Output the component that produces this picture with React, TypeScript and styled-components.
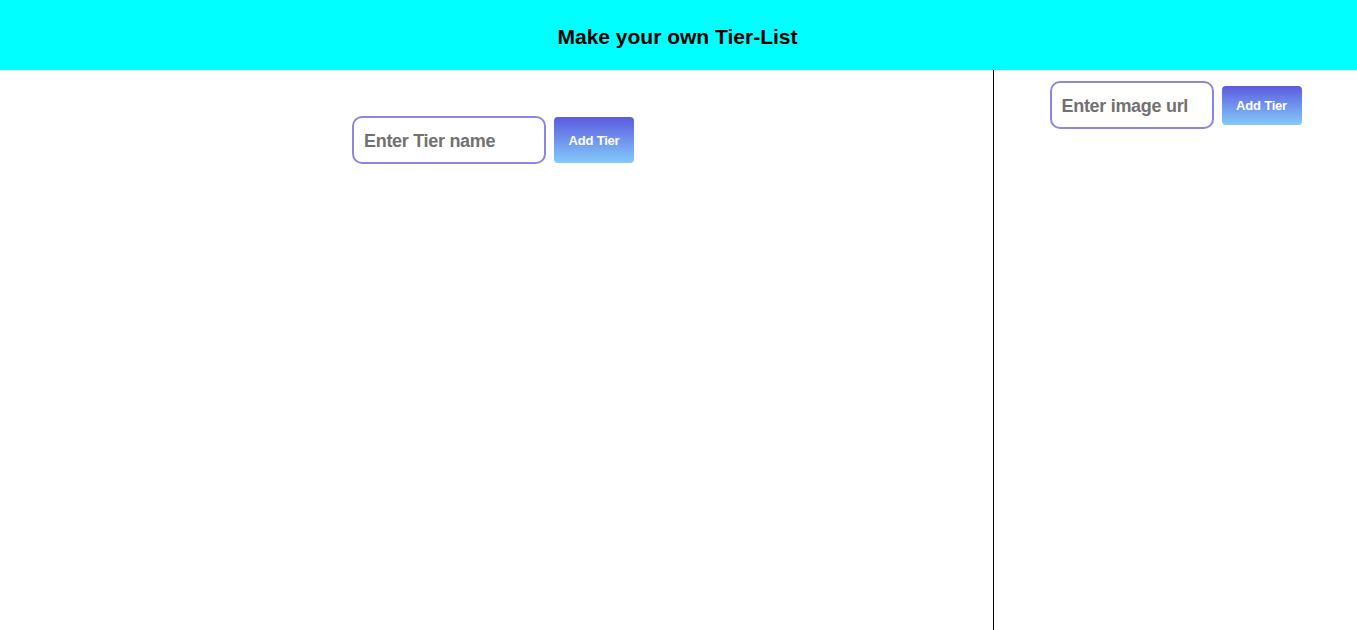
import React from "react";
import styled, { createGlobalStyle } from "styled-components";

const Global = createGlobalStyle`
  html, body { margin: 0; padding: 0; background: #fff; }
  body { font-family: "Liberation Sans", Arial, sans-serif; }
  * { box-sizing: border-box; }
`;

const Page = styled.div`
  display: flex;
  flex-direction: column;
  height: 630px;
`;

const Header = styled.header`
  height: 70px;
  background: #00ffff;
  display: flex;
  align-items: center;
  justify-content: center;
  padding: 3px 2px 0 0;
`;

const Title = styled.h1`
  margin: 0;
  font-size: 21px;
  font-weight: 700;
  color: #000;
  letter-spacing: 0;
`;

const Body = styled.div`
  flex: 1;
  display: flex;
`;

const Main = styled.section`
  width: 994px;
  border-right: 1px solid #000;
  display: flex;
  justify-content: center;
  align-items: flex-start;
  padding: 46px 7px 0 0;
`;

const Side = styled.aside`
  flex: 1;
  display: flex;
  justify-content: center;
  align-items: flex-start;
  padding: 11px 0 0 0;
`;

const Form = styled.form`
  display: flex;
  align-items: center;
  gap: 8px;
`;

const Input = styled.input<{ $w: number }>`
  width: ${(p) => p.$w}px;
  height: 48px;
  border: 2px solid #8b86e4;
  border-radius: 10px;
  padding: 2px 10px 0;
  font-family: "Liberation Sans", Arial, sans-serif;
  font-size: 18px;
  font-weight: 700;
  color: #333;
  outline: none;
  &::placeholder {
    color: #717171;
    letter-spacing: -0.3px;
  }
`;

const Button = styled.button<{ $h: number }>`
  width: 80px;
  height: ${(p) => p.$h}px;
  border: none;
  border-radius: 4px;
  background: linear-gradient(to bottom, #5c5bdf, #84cafb);
  color: #fff;
  font-family: "Liberation Sans", Arial, sans-serif;
  font-size: 13px;
  font-weight: 700;
  letter-spacing: -0.2px;
  cursor: pointer;
  padding: 1px 0 0;
`;

export default function App() {
  return (
    <>
      <Global />
      <Page>
        <Header>
          <Title>Make your own Tier-List</Title>
        </Header>
        <Body>
          <Main>
            <Form onSubmit={(e) => e.preventDefault()}>
              <Input $w={194} placeholder="Enter Tier name" />
              <Button $h={46} type="submit">Add Tier</Button>
            </Form>
          </Main>
          <Side>
            <Form onSubmit={(e) => e.preventDefault()}>
              <Input $w={164} placeholder="Enter image url" />
              <Button $h={39} type="submit">Add Tier</Button>
            </Form>
          </Side>
        </Body>
      </Page>
    </>
  );
}
